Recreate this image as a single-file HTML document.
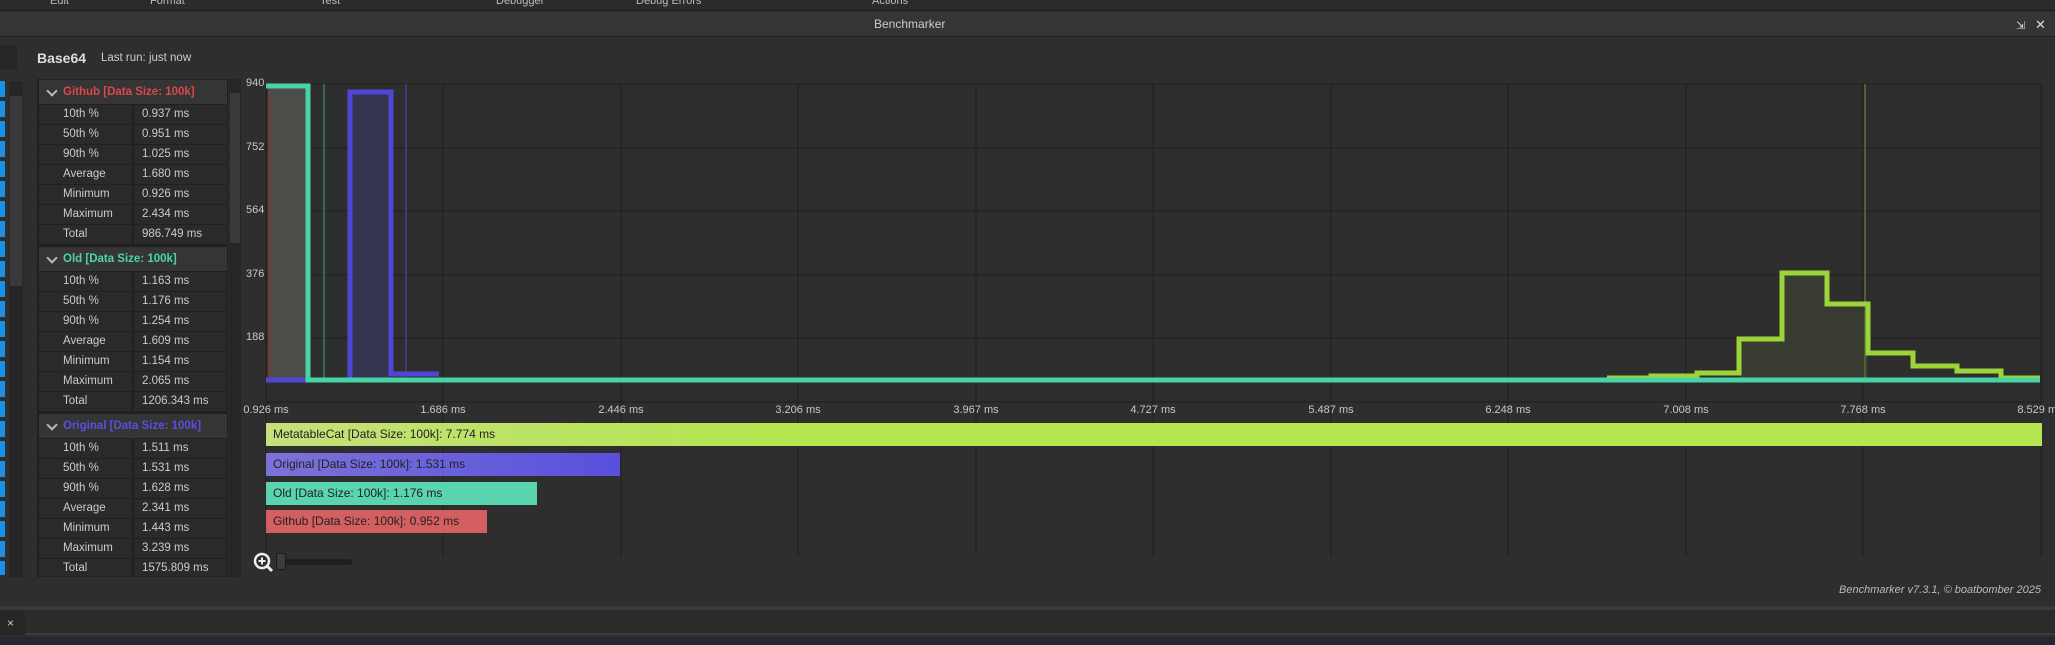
<!DOCTYPE html>
<html><head><meta charset="utf-8"><style>
*{margin:0;padding:0;box-sizing:border-box}
body{width:2055px;height:645px;background:#2e2e2e;overflow:hidden;position:relative;font-family:"Liberation Sans",sans-serif;color:#ccc}
.a{position:absolute}
.menu{top:0;left:0;width:2055px;height:11px;background:#2b2b2b;border-bottom:1px solid #1e1e1e;font-size:11px;color:#bbb;overflow:hidden}
.menu span{position:absolute;top:-5px}
.title{top:12px;left:0;width:2055px;height:25px;background:#353535;border-bottom:1px solid #232323;font-size:12px;line-height:24px;color:#ccc}
.row{position:absolute;left:39px;width:188px;height:19px;font-size:11.5px;color:#ccc}
.row .l{position:absolute;left:0;width:93px;height:19px;background:#2a2a2a;padding-left:24px;line-height:19px}
.row .v{position:absolute;left:95px;width:93px;height:19px;background:#2a2a2a;padding-left:8px;line-height:19px}
.hd{position:absolute;left:39px;width:188px;height:24px;background:#353535;font-size:11.5px;font-weight:bold;line-height:24px;padding-left:24px}
.hd:before{content:"";position:absolute;left:9px;top:7px;width:6px;height:6px;border-right:2px solid #bbb;border-bottom:2px solid #bbb;transform:rotate(45deg)}
.xl{position:absolute;top:404px;font-size:11px;color:#c8c8c8;transform:translateX(-50%);white-space:nowrap}
.yl{position:absolute;left:246px;font-size:11px;color:#c8c8c8}
.bar{position:absolute;left:266px;height:23px;font-size:12px;line-height:23px;padding-left:7px;color:#222;white-space:nowrap}
</style></head><body>
<div class="a menu"><span style="left:50px">Edit</span><span style="left:150px">Format</span><span style="left:320px">Test</span><span style="left:496px">Debugger</span><span style="left:636px">Debug Errors</span><span style="left:872px">Actions</span></div>
<div class="a title"><span style="position:absolute;left:874px">Benchmarker</span></div>
<div class="a" style="left:2016px;top:19px;font-size:11px;color:#ddd">⇲</div>
<div class="a" style="left:2035px;top:17px;font-size:13px;color:#ddd">✕</div>

<div class="a" style="left:0;top:45px;width:17px;height:25px;background:#262626;border-radius:3px"></div>
<div class="a" style="left:0;top:81px;width:5px;height:494px;background:repeating-linear-gradient(#1b8ee8 0 16px,#2e2e2e 16px 20px)"></div>
<div class="a" style="left:9px;top:81px;width:14px;height:496px;background:#262626"></div>
<div class="a" style="left:10px;top:96px;width:12px;height:190px;background:#3a3a3a"></div>

<div class="a" style="left:37px;top:50px;font-size:14px;font-weight:bold;color:#ddd">Base64</div>
<div class="a" style="left:101px;top:52px;font-size:11.5px;color:#ccc">Last run: just now</div>

<div class="a" style="left:37px;top:79px;width:191px;height:498px;background:#202020;overflow:hidden"></div>
<div class="hd" style="top:80px;color:#d9484b">Github [Data Size: 100k]</div>
<div class="row" style="top:105px"><div class="l">10th %</div><div class="v">0.937 ms</div></div>
<div class="row" style="top:125px"><div class="l">50th %</div><div class="v">0.951 ms</div></div>
<div class="row" style="top:145px"><div class="l">90th %</div><div class="v">1.025 ms</div></div>
<div class="row" style="top:165px"><div class="l">Average</div><div class="v">1.680 ms</div></div>
<div class="row" style="top:185px"><div class="l">Minimum</div><div class="v">0.926 ms</div></div>
<div class="row" style="top:205px"><div class="l">Maximum</div><div class="v">2.434 ms</div></div>
<div class="row" style="top:225px"><div class="l">Total</div><div class="v">986.749 ms</div></div>
<div class="hd" style="top:247px;color:#4fd4a8">Old [Data Size: 100k]</div>
<div class="row" style="top:272px"><div class="l">10th %</div><div class="v">1.163 ms</div></div>
<div class="row" style="top:292px"><div class="l">50th %</div><div class="v">1.176 ms</div></div>
<div class="row" style="top:312px"><div class="l">90th %</div><div class="v">1.254 ms</div></div>
<div class="row" style="top:332px"><div class="l">Average</div><div class="v">1.609 ms</div></div>
<div class="row" style="top:352px"><div class="l">Minimum</div><div class="v">1.154 ms</div></div>
<div class="row" style="top:372px"><div class="l">Maximum</div><div class="v">2.065 ms</div></div>
<div class="row" style="top:392px"><div class="l">Total</div><div class="v">1206.343 ms</div></div>
<div class="hd" style="top:414px;color:#5a4fe0">Original [Data Size: 100k]</div>
<div class="row" style="top:439px"><div class="l">10th %</div><div class="v">1.511 ms</div></div>
<div class="row" style="top:459px"><div class="l">50th %</div><div class="v">1.531 ms</div></div>
<div class="row" style="top:479px"><div class="l">90th %</div><div class="v">1.628 ms</div></div>
<div class="row" style="top:499px"><div class="l">Average</div><div class="v">2.341 ms</div></div>
<div class="row" style="top:519px"><div class="l">Minimum</div><div class="v">1.443 ms</div></div>
<div class="row" style="top:539px"><div class="l">Maximum</div><div class="v">3.239 ms</div></div>
<div class="row" style="top:559px;height:17px;overflow:hidden"><div class="l">Total</div><div class="v">1575.809 ms</div></div>
<div class="a" style="left:0;top:577px;width:260px;height:20px;background:#2e2e2e"></div>

<div class="a" style="left:229px;top:79px;width:12px;height:498px;background:#262626"></div>
<div class="a" style="left:230px;top:93px;width:10px;height:150px;background:#3a3a3a"></div>

<svg class="a" style="left:0;top:0" width="2055" height="645">
<g stroke="#1f1f1f" stroke-width="1">
<line x1="266" y1="84" x2="2041" y2="84"/><line x1="266" y1="148" x2="2041" y2="148"/><line x1="266" y1="211" x2="2041" y2="211"/><line x1="266" y1="275" x2="2041" y2="275"/><line x1="266" y1="338" x2="2041" y2="338"/><line x1="266" y1="402" x2="2041" y2="402"/>
<line x1="266" y1="84" x2="266" y2="556"/><line x1="443" y1="84" x2="443" y2="556"/><line x1="621" y1="84" x2="621" y2="556"/><line x1="798" y1="84" x2="798" y2="556"/><line x1="976" y1="84" x2="976" y2="556"/><line x1="1153" y1="84" x2="1153" y2="556"/><line x1="1331" y1="84" x2="1331" y2="556"/><line x1="1508" y1="84" x2="1508" y2="556"/><line x1="1686" y1="84" x2="1686" y2="556"/><line x1="1863" y1="84" x2="1863" y2="556"/><line x1="2041" y1="84" x2="2041" y2="556"/>
</g>
<rect x="268" y="86" width="38" height="294" fill="#4a4d48"/>
<rect x="352" y="92" width="37" height="288" fill="#353450"/>
<path d="M1739 380V339H1782V273H1827V304H1868V380Z" fill="#383b30"/>
<line x1="269" y1="86" x2="269" y2="381" stroke="#7a3a3a" stroke-width="2"/>
<line x1="324" y1="84" x2="324" y2="381" stroke="#2f6b56" stroke-width="2"/>
<line x1="406" y1="84" x2="406" y2="381" stroke="#3b3a7a" stroke-width="2"/>
<line x1="1865" y1="84" x2="1865" y2="381" stroke="#4d6230" stroke-width="2"/>
<path d="M1607 378H1651V376H1697V373H1739V339H1782V273H1827V304H1868V353H1913V366H1957V371H2001V378H2040" fill="none" stroke="#9dd43a" stroke-width="5"/>
<path d="M266 380H350V92H391V374H439" fill="none" stroke="#5046d6" stroke-width="5"/>
<path d="M266 86H308V380H2040" fill="none" stroke="#47d3a6" stroke-width="5"/>
<g transform="translate(262,561)"><circle cx="0" cy="0" r="7" fill="none" stroke="#eee" stroke-width="2.5"/><path d="M-3.5 0H3.5M0-3.5V3.5" stroke="#eee" stroke-width="2"/><path d="M5 5L10 10" stroke="#eee" stroke-width="3"/></g>
</svg>
<div class="yl" style="top:77px">940</div>
<div class="yl" style="top:141px">752</div>
<div class="yl" style="top:204px">564</div>
<div class="yl" style="top:268px">376</div>
<div class="yl" style="top:331px">188</div>
<div class="xl" style="left:266px">0.926 ms</div>
<div class="xl" style="left:443px">1.686 ms</div>
<div class="xl" style="left:621px">2.446 ms</div>
<div class="xl" style="left:798px">3.206 ms</div>
<div class="xl" style="left:976px">3.967 ms</div>
<div class="xl" style="left:1153px">4.727 ms</div>
<div class="xl" style="left:1331px">5.487 ms</div>
<div class="xl" style="left:1508px">6.248 ms</div>
<div class="xl" style="left:1686px">7.008 ms</div>
<div class="xl" style="left:1863px">7.768 ms</div>
<div class="xl" style="left:2040px">8.529 ms</div>

<div class="bar" style="top:423px;width:1776px;background:linear-gradient(90deg,#c6e07a,#b3e64f 30%)">MetatableCat [Data Size: 100k]: 7.774 ms</div>
<div class="bar" style="top:453px;width:354px;background:linear-gradient(90deg,#7b73d8,#5a4fdc)">Original [Data Size: 100k]: 1.531 ms</div>
<div class="bar" style="top:482px;width:271px;background:#5ad4ae">Old [Data Size: 100k]: 1.176 ms</div>
<div class="bar" style="top:510px;width:221px;background:#d45f61">Github [Data Size: 100k]: 0.952 ms</div>

<div class="a" style="left:276px;top:553px;width:10px;height:17px;background:#3c3c3c;border:1px solid #1a1a1a;border-radius:2px"></div>
<div class="a" style="left:286px;top:559px;width:66px;height:6px;background:#1f1f1f;border-radius:2px"></div>

<div class="a" style="left:1500px;top:584px;width:541px;text-align:right;font-size:11px;font-style:italic;color:#bbb">Benchmarker v7.3.1, © boatbomber 2025</div>

<div class="a" style="left:0;top:606px;width:2055px;height:4px;background:#3a3a3a"></div>
<div class="a" style="left:0;top:610px;width:2055px;height:25px;background:#2b2b2b"></div>
<div class="a" style="left:0;top:611px;width:25px;height:24px;background:#262626;font-size:12px;color:#ccc;padding:5px 0 0 7px">×</div>
<div class="a" style="left:25px;top:633px;width:2030px;height:2px;background:#3a3a3a"></div>
<div class="a" style="left:0;top:637px;width:2055px;height:8px;background:#252830"></div>
</body></html>
